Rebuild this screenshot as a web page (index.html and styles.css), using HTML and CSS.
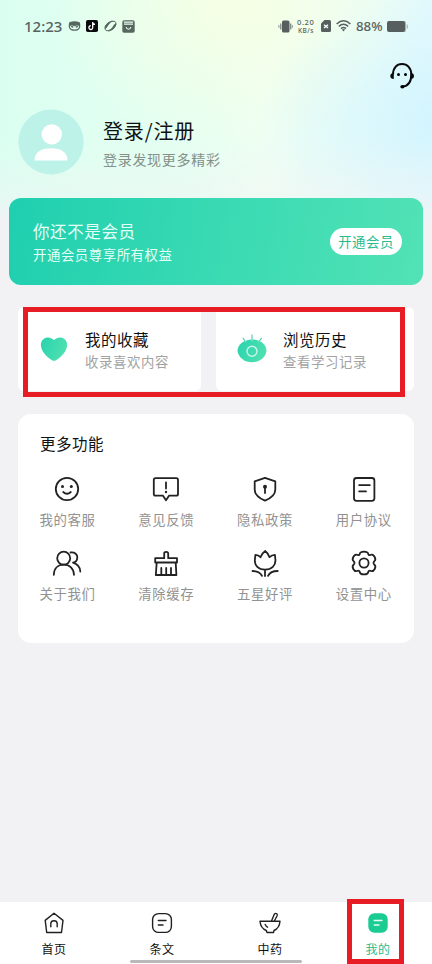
FILE: index.html
```html
<!DOCTYPE html>
<html lang="zh-CN">
<head>
<meta charset="utf-8">
<title>我的</title>
<link rel="stylesheet" href="styles.css">
</head>
<body>
<div class="app">
  <header class="status">
    <span class="clock">12:23</span>
    <svg class="st-cat" width="13" height="12" viewBox="0 0 14 12"><path d="M1.5 2Q7 0 12.5 2Q13.6 4 13.2 7Q12 11.2 7 11.2Q2 11.2 .8 7Q.4 4 1.5 2Z" fill="#56675f"/><path d="M2 6Q4.5 4.6 7 6.4Q9.5 4.6 12 6Q12 9.8 7 9.8T2 6Z" fill="#e3fff3"/><path d="M2.9 6.4Q5 5.4 6.2 7.2Q4 9 2.9 6.4ZM11.1 6.4Q9 5.4 7.8 7.2Q10 9 11.1 6.4Z" fill="#56675f"/></svg>
    <svg class="st-note" width="12" height="12" viewBox="0 0 12 12"><rect width="12" height="12" rx="1.8" fill="#090b0c"/><path d="M6.7 2V7.4A1.9 1.9 0 1 1 4.8 5.7M6.7 2Q7 4.2 9 4.5" fill="none" stroke="#fff" stroke-width="1.3"/></svg>
    <svg class="st-leaf" width="13" height="12" viewBox="0 0 13 12"><path d="M1 9Q0 6 4 2.8Q7 .6 10 1.2Q6 2 4.5 5T1 9ZM12 3Q13 6 9 9.2Q6 11.4 3 10.8Q7 10 8.5 7T12 3Z" fill="#56675f"/><path d="M1 9Q0 6 4 2.8Q8 0 11 1.5Q13.8 4 9 9.2Q5 12 2 10.5L1 9" fill="none" stroke="#56675f" stroke-width=".9"/></svg>
    <svg class="st-box" width="13" height="13" viewBox="0 0 13 13"><rect x=".3" y=".3" width="12.4" height="12.4" rx="1.8" fill="#56675f"/><path d="M1.8 2.1H11.2M2 4.1H11M4.2 7Q4.5 9.2 6.5 9.2T8.8 7" fill="none" stroke="#e8fff2" stroke-width="1.1"/></svg>
    <span class="gap"></span>
    <svg class="st-vib" width="15" height="13" viewBox="0 0 15 13"><rect x="4" y=".5" width="7.5" height="12" rx="1.6" fill="#565f5e"/><path d="M2.8 3.5V9.5M12.7 3.5V9.5" stroke="#7d8784" stroke-width="1.3"/><path d="M.9 5V8M14.4 5V8" stroke="#9ba5a2" stroke-width="1.1"/></svg>
    <span class="rate"><span>0.20</span><span>KB/s</span></span>
    <svg class="st-sim" width="10" height="12" viewBox="0 0 10 12"><path d="M3.5 0H8.5Q10 0 10 1.5V10.5Q10 12 8.5 12H1.5Q0 12 0 10.5V3.5Z" fill="#565f5e"/><path d="M3 4.7L7 8M7 4.7L3 8" stroke="#f2fff8" stroke-width="1.4"/></svg>
    <svg class="st-wifi" width="15" height="12" viewBox="0 0 15 12"><path d="M.6 4Q7.5-2.4 14.4 4M2.8 6.4Q7.5 2.2 12.2 6.4M5 8.6Q7.5 6.5 10 8.6" fill="none" stroke="#565f5e" stroke-width="1.45"/><path d="M5.9 9.6Q7.5 8.4 9.1 9.6L7.5 11.6Z" fill="#565f5e"/></svg>
    <span class="pct">88%</span>
    <svg class="st-bat" width="21" height="11" viewBox="0 0 21 11"><path d="M16 0H17.5Q19 0 19 2V9Q19 11 17.5 11H16ZM19.6 3Q21 3 21 5.5T19.6 8Z" fill="#a9b6b6"/><rect width="18" height="11" rx="2" fill="#565f5e"/></svg>
  </header>

  <div class="service">
    <svg width="26" height="28" viewBox="0 0 26 28"><path d="M4 12.5C4 6 7.7 2 13 2S22.3 6 22.3 12.5C22.3 20 19 24 13.5 24.6" fill="none" stroke="#080a0b" stroke-width="2"/><path d="M4.8 11V17Q1.3 17 1.3 14T4.8 11ZM21.5 11V17Q25 17 25 14T21.5 11Z" fill="#080a0b"/><circle cx="9.5" cy="12.6" r="1.5"/><circle cx="16.5" cy="12.6" r="1.5"/><ellipse cx="13.3" cy="24.7" rx="2" ry="1.7"/></svg>
  </div>

  <section class="profile">
    <svg class="avatar" width="66" height="66" viewBox="0 0 66 66"><circle cx="33" cy="33" r="32.6" fill="#bcf2e7"/><circle cx="33.8" cy="25.4" r="10.2" fill="#fff"/><path d="M16.5 51.4C16.5 43.5 22.5 39.2 33 39.2S49.5 43.5 49.5 51.4Z" fill="#fff"/></svg>
    <div>
      <div class="login">登录/注册</div>
      <div class="tagline">登录发现更多精彩</div>
    </div>
  </section>

  <section class="vip">
    <div>
      <div class="vip-title">你还不是会员</div>
      <div class="vip-sub">开通会员尊享所有权益</div>
    </div>
    <div class="vip-btn">开通会员</div>
  </section>

  <section class="shortcuts">
    <div class="short first">
      <svg width="28" height="26" viewBox="0 0 28 26"><defs><linearGradient id="g" x2="1" y2=".4"><stop stop-color="#28d2ae"/><stop offset="1" stop-color="#4ee0b1"/></linearGradient></defs><path d="M14 4.2C16.3 1.6 20 1 22.5 2C26.2 3.4 27.6 6.8 26.9 10.8C26 16.2 21.2 21 16 24.2Q14 25.4 12 24.2C6.8 21 2 16.2 1.1 10.8C.4 6.8 1.8 3.4 5.5 2C8 1 11.7 1.6 14 4.2Z" fill="url(#g)"/></svg>
      <div><div class="short-title">我的收藏</div><div class="short-sub">收录喜欢内容</div></div>
    </div>
    <div class="short second">
      <svg width="30" height="30" viewBox="0 0 30 30"><path d="M15 .5V6M5.8 3.8L8.5 8M24.6 3.8L21.8 8" stroke="#58cfad" stroke-width="1.2"/><path d="M.5 17C.5 10.5 7 5.5 15 5.5S29.5 10.5 29.5 17C28.5 23.5 22.5 28.3 15 28.3S1.5 23.5 .5 17Z" fill="url(#g)"/><path d="M15 5V7.2M8 7.2L8.8 8.4M22.3 7.2L21.5 8.4" stroke="#8deccf" stroke-width="1"/><circle cx="15" cy="17.2" r="5" fill="none" stroke="#c9f8e8" stroke-width="1.4"/></svg>
      <div><div class="short-title">浏览历史</div><div class="short-sub">查看学习记录</div></div>
    </div>
    <div class="mark mark-short"></div>
  </section>

  <section class="more">
    <h2>更多功能</h2>
    <div class="grid">
      <div class="item"><svg viewBox="0 0 30 30"><circle cx="15" cy="15" r="11.2"/><path d="M11.2 18Q15 21.6 18.8 18"/><g class="dot"><circle cx="10.5" cy="12.5" r="1.5"/><circle cx="19.3" cy="12.5" r="1.5"/></g></svg><span>我的客服</span></div>
      <div class="item"><svg viewBox="0 0 30 30"><path d="M4.5 4.2H25.3Q27 4.2 27 6V20Q27 21.7 25.3 21.7H18L15 26.2L12 21.7H4.5Q2.8 21.7 2.8 20V6Q2.8 4.2 4.5 4.2Z"/><path d="M15 8.5V14.5"/><circle class="dot" cx="15" cy="18" r="1.2"/></svg><span>意见反馈</span></div>
      <div class="item"><svg viewBox="0 0 30 30"><path d="M15 3.8L25.3 7.3V15.5C25.3 21 20 24.6 15 26.6C10 24.6 4.7 21 4.7 15.5V7.3Z"/><circle class="dot" cx="15" cy="12.7" r="2"/><path d="M15 13V19"/></svg><span>隐私政策</span></div>
      <div class="item"><svg viewBox="0 0 30 30"><rect x="5" y="4" width="20.4" height="22.8" rx="2.5"/><path d="M10.2 11.2H20.8M10.2 17.4H17"/></svg><span>用户协议</span></div>
      <div class="item"><svg viewBox="0 0 30 30"><circle cx="11.7" cy="10.2" r="6.5"/><path d="M1.8 26.8C2 20.5 6 16.7 11.8 16.7S21.8 20.5 22 26.8M18.5 4.5C23 4 25.5 6.5 25.3 9.5C25.2 12 23.5 14.3 21 14.7C25.5 16 28 19 28.3 23.5"/></svg><span>关于我们</span></div>
      <div class="item"><svg viewBox="0 0 30 30"><path d="M13.2 10.2V5.5Q13.2 3.8 15.2 3.8T17.2 5.5V10.2H26V14.5H4.2V10.2ZM5.7 14.5L4.8 27H25.4L24.7 14.5M10.3 26.5V20M15.2 26.5V20M20 26.5V20"/></svg><span>清除缓存</span></div>
      <div class="item"><svg viewBox="0 0 30 30"><path d="M15 21.6C8.5 21.6 4.3 17.5 4.9 11.5L5.4 6.8Q8.5 6.8 10.5 9.2C11.5 6.5 13 4.5 15.2 3C17.2 4.5 18.6 6.5 19.5 9.2Q21.8 6.8 24.9 6.8L25.4 11.5C26 17.5 21.5 21.6 15 21.6ZM15 22V28M2.5 23Q9.5 23 12 27.8M27.7 23Q20.5 23 18 27.8"/></svg><span>五星好评</span></div>
      <div class="item"><svg viewBox="0 0 30 30"><path d="M10.6 6.4C10.8 4.5 12.3 3.6 15 3.6S19.2 4.5 19.4 6.4Q19.8 7.6 21.3 7C23 6 24.6 7 25.7 9C26.8 11 26.6 12.4 25 13.6Q23.8 15 25 16.2C26.6 17.4 26.8 19 25.7 21C24.6 23 23 23.6 21.3 22.8Q19.8 22.4 19.4 23.6C19.2 25.5 17.7 26.4 15 26.4S10.8 25.5 10.6 23.6Q10.2 22.4 8.7 22.8C7 23.6 5.4 23 4.3 21C3.2 19 3.4 17.4 5 16.2Q6.2 15 5 13.6C3.4 12.4 3.2 11 4.3 9C5.4 7 7 6 8.7 7Q10.2 7.6 10.6 6.4Z"/><circle cx="15" cy="15" r="4.6"/></svg><span>设置中心</span></div>
    </div>
  </section>

  <nav class="tabs">
    <div class="tab"><svg viewBox="0 0 24 24"><path d="M12 2.2L21 9.4L19.5 21.5H4.7L3.2 9.4ZM8.8 15.8V12.5Q9 9.7 12 9.7T15.2 12.5V15.8"/></svg><span>首页</span></div>
    <div class="tab"><svg viewBox="0 0 24 24"><rect x="2.6" y="2.6" width="18.8" height="18.8" rx="6"/><path d="M8.3 9.5H16M8.3 14H13"/></svg><span>条文</span></div>
    <div class="tab"><svg viewBox="0 0 24 24"><path d="M2 10.2H22Q21.5 17 16 19.5L15.5 21.5H9L8.3 19.5Q2.5 17 2 10.2ZM13.5 10L16.3 3.2Q17.5 1.8 18.8 2.8Q19.7 3.6 19 5L16.3 10M7.2 13.5Q8 15.3 9.5 16.2"/></svg><span>中药</span></div>
    <div class="tab active"><svg viewBox="0 0 24 24"><rect x="2.3" y="2.3" width="19.4" height="19.4" rx="6" fill="#1bcc92" stroke="none"/><path d="M8.2 9.5H16M8.2 14H13" stroke="#e6fff4"/></svg><span>我的</span><div class="mark mark-tab"></div></div>
    <div class="home-bar"></div>
  </nav>
</div>
</body>
</html>
```
FILE: styles.css
```css
* { box-sizing: border-box; }
body {
  margin: 0;
  font-family: "Noto Sans CJK SC", "Noto Sans", sans-serif;
  color: #111;
}
.app {
  width: 432px;
  height: 964px;
  display: flex;
  flex-direction: column;
  overflow: hidden;
  background:
    linear-gradient(180deg, rgba(242,242,244,0) 0, rgba(242,242,244,0) 140px, rgba(242,242,244,.4) 195px, #f2f2f4 222px),
    radial-gradient(ellipse 190px 130px at 442px 125px, rgba(208,244,255,.85) 0, rgba(210,246,255,0) 100%),
    radial-gradient(ellipse 190px 150px at 235px 0, #f6ffe4 0, rgba(247,255,230,0) 100%),
    linear-gradient(90deg, #dafff1 0, #e5fff1 45%, #effff3 62%, #e8fcf8 85%, #e2f9fd 100%);
}
.status {
  height: 52px;
  display: flex;
  align-items: center;
  padding: 0 24px;
  color: #56625e;
  font-family: "Noto Sans", sans-serif;
  flex: none;
}
.clock { width: 44px; font-size: 15px; font-weight: 500; letter-spacing: 0; line-height: 20px; }
.st-cat { margin-right: 5px; }
.st-note { margin-right: 6px; }
.st-leaf { margin-right: 5px; }
.gap { flex: 1; }
.st-vib { margin-right: 4px; }
.rate { width: 20px; display: flex; flex-direction: column; gap: 1px; font-size: 7.5px; line-height: 7px; font-weight: 500; margin-right: 4px; white-space: nowrap; }
.rate span { display: block; height: 7px; }
.rate span:first-child { letter-spacing: .6px; }
.rate span:last-child { font-size: 6.5px; letter-spacing: .5px; padding-left: 1px; }
.st-sim { margin-right: 5px; }
.st-wifi { margin-right: 5px; }
.pct { width: 31px; font-size: 13.3px; font-weight: 500; line-height: 20px; }
.service { height: 54px; flex: none; display: flex; justify-content: flex-end; padding: 10px 17px 0 0; }
.profile { height: 92px; flex: none; display: flex; padding: 3px 0 0 18px; }
.avatar { margin-right: 19px; }
.login { font-size: 20px; line-height: 28px; padding-top: 8px; letter-spacing: .85px; height: 36px; font-weight: 400; }
.tagline { font-size: 14px; line-height: 22px; margin-top: 3px; color: #849089; letter-spacing: .7px; }
.vip {
  height: 87px;
  flex: none;
  margin: 0 9px;
  border-radius: 12px;
  padding: 0 21px 0 24px;
  display: flex;
  align-items: center;
  justify-content: space-between;
  background: linear-gradient(100deg, #1fcfaf 0, #39dab3 50%, #52e2b5 100%);
  color: #e4fff6;
}
.vip-title { font-size: 16.5px; line-height: 24px; letter-spacing: .6px; margin-top: 1px; }
.vip-sub { font-size: 13.4px; line-height: 22px; letter-spacing: .55px; }
.vip-btn { width: 72px; height: 27px; border-radius: 14px; background: #fff; color: #2abb8d; font-size: 13.4px; line-height: 27px; letter-spacing: .5px; text-align: center; }
.shortcuts { position: relative; height: 84px; flex: none; margin: 22px 18px 0; display: flex; gap: 15px; }
.short { height: 84px; border-radius: 6px; background: #fff; display: flex; align-items: center; }
.first { width: 183px; padding-left: 22px; }
.first svg { margin-right: 17px; }
.second { width: 198px; padding-left: 21px; }
.second svg { margin-right: 16px; }
.short-title { font-size: 15.5px; line-height: 23px; letter-spacing: .5px; }
.short-sub { font-size: 13.4px; line-height: 21px; letter-spacing: .6px; color: #a3a3a3; }
.short > div { padding-top: 1px; }
.mark { position: absolute; border: 5px solid #e81c25; }
.mark-short { left: 5px; top: 0; width: 382px; height: 90px; }
.more { height: 229px; flex: none; margin: 23px 18px 0; border-radius: 13px; background: #fff; }
.more h2 { margin: 0; padding: 16px 0 0 22px; height: 59px; font-size: 15.5px; line-height: 26px; letter-spacing: .5px; font-weight: 400; }
.grid { display: grid; grid-template-columns: repeat(4, 98.8px); grid-auto-rows: 73.5px; }
.item { display: flex; flex-direction: column; align-items: center; color: #929292; font-size: 13.4px; line-height: 20px; letter-spacing: .6px; }
.item svg { width: 32px; height: 32px; padding: 1px; margin-bottom: 4px; fill: none; stroke: #222; stroke-width: 1.8; stroke-linecap: round; stroke-linejoin: round; }
.item .dot { fill: #222; stroke: none; }
.tabs { position: relative; margin-top: auto; height: 62px; flex: none; background: #fff; display: grid; grid-template-columns: repeat(4, 108px); }
.tab { position: relative; display: flex; flex-direction: column; align-items: center; padding-top: 9px; font-size: 12px; line-height: 18px; letter-spacing: .4px; }
.tab svg { width: 24px; height: 24px; margin-bottom: 5px; fill: none; stroke: #202020; stroke-width: 1.4; stroke-linecap: round; stroke-linejoin: round; }
.active { color: #28bb8e; }
.mark-tab { left: 23px; top: -3px; width: 57px; height: 65px; }
.home-bar { position: absolute; left: 130px; bottom: 1px; width: 172px; height: 3px; border-radius: 2px; background: #b9b9b9; }
```
